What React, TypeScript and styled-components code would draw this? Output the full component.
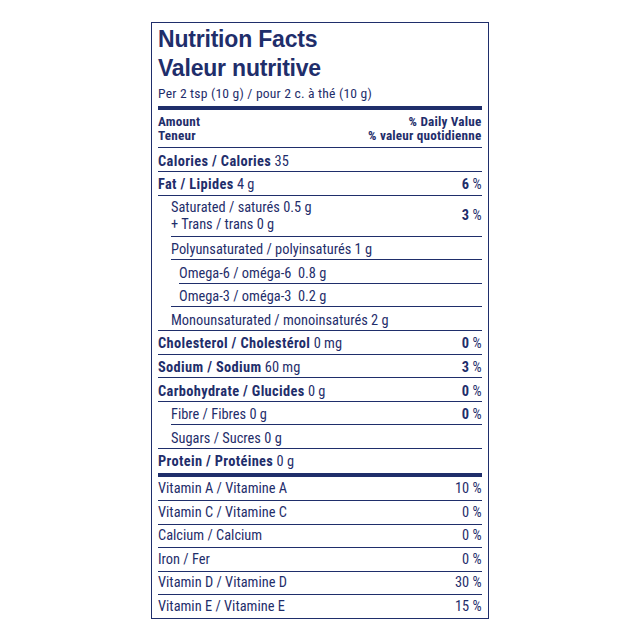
import React from "react";
import styled, { createGlobalStyle } from "styled-components";

const NAVY = "#1f2e6b";

const GlobalStyle = createGlobalStyle`
  html, body {
    margin: 0;
    padding: 0;
    background: #ffffff;
  }
  body {
    font-family: "Roboto Condensed", "Liberation Sans", Arial, sans-serif;
    color: ${NAVY};
  }
`;

const Page = styled.div`
  width: 640px;
  height: 640px;
  padding-top: 21.5px;
  box-sizing: border-box;
`;

const Label = styled.section`
  width: 338px;
  margin: 0 auto;
  box-sizing: border-box;
  border: 1.5px solid ${NAVY};
  padding: 2.5px 6.5px 0 6px;
`;

const Title = styled.h1`
  margin: 0;
  font-family: "Liberation Sans", Arial, sans-serif;
  font-size: 23px;
  line-height: 29px;
  font-weight: 700;
  letter-spacing: -0.2px;
`;

const Serving = styled.p`
  margin: 2px 0 0;
  font-size: 13.6px;
  line-height: 16px;
  letter-spacing: 0.2px;
`;

const ThickRule = styled.div<{ $top: number }>`
  height: 4px;
  margin-top: ${(p) => p.$top}px;
  background: ${NAVY};
`;

const Header = styled.div`
  display: flex;
  justify-content: space-between;
  padding: 4.9px 0 3.5px;
  font-size: 13.2px;
  line-height: 14.5px;
  font-weight: 700;
  letter-spacing: 0.2px;
`;

const HeaderCol = styled.div<{ $right?: boolean }>`
  text-align: ${(p) => (p.$right ? "right" : "left")};
`;

const Row = styled.div<{ $indent: number; $rule: number; $tall?: boolean }>`
  display: flex;
  justify-content: space-between;
  align-items: center;
  margin-left: ${(p) => p.$rule}px;
  padding: ${(p) => (p.$tall ? "3.5px 0 2.5px" : "4.5px 0 0.1px")}
    ${(p) => p.$indent - p.$rule}px;
  border-top: 1px solid ${NAVY};
  font-size: 14.4px;
  line-height: 18px;
`;

const Lines = styled.div`
  line-height: 17px;
`;

const Name = styled.span`
  font-weight: 700;
  letter-spacing: 0.35px;
`;

const Percent = styled.span`
  white-space: nowrap;
`;

const Digit = styled.b`
  font-weight: 700;
`;

const VitRow = styled.div<{ $first?: boolean }>`
  display: flex;
  justify-content: space-between;
  padding: ${(p) => (p.$first ? "3.5px 0 2.1px" : "2.5px 0 2.1px")};
  border-top: ${(p) => (p.$first ? "none" : `1px solid ${NAVY}`)};
  font-size: 14.4px;
  line-height: 18px;
`;

type Nutrient = {
  name?: string;
  amount?: string;
  lines?: string[];
  dv?: string;
  level: number;
};

const nutrients: Nutrient[] = [
  { name: "Calories / Calories", amount: "35", level: 0 },
  { name: "Fat / Lipides", amount: "4 g", dv: "6", level: 0 },
  { lines: ["Saturated / saturés 0.5 g", "+ Trans / trans 0 g"], dv: "3", level: 1 },
  { amount: "Polyunsaturated / polyinsaturés 1 g", level: 1 },
  { amount: "Omega-6 / oméga-6 \u00a00.8 g", level: 2 },
  { amount: "Omega-3 / oméga-3 \u00a00.2 g", level: 2 },
  { amount: "Monounsaturated / monoinsaturés 2 g", level: 1 },
  { name: "Cholesterol / Cholestérol", amount: "0 mg", dv: "0", level: 0 },
  { name: "Sodium / Sodium", amount: "60 mg", dv: "3", level: 0 },
  { name: "Carbohydrate / Glucides", amount: "0 g", dv: "0", level: 0 },
  { amount: "Fibre / Fibres 0 g", dv: "0", level: 1 },
  { amount: "Sugars / Sucres 0 g", level: 1 },
  { name: "Protein / Protéines", amount: "0 g", level: 0 },
];

const vitamins: [string, string][] = [
  ["Vitamin A / Vitamine A", "10 %"],
  ["Vitamin C / Vitamine C", "0 %"],
  ["Calcium / Calcium", "0 %"],
  ["Iron / Fer", "0 %"],
  ["Vitamin D / Vitamine D", "30 %"],
  ["Vitamin E / Vitamine E", "15 %"],
];

const INDENT = [0, 13, 21];

const App = () => {
  return (
    <Page>
      <GlobalStyle />
      <Label>
        <Title>
          Nutrition Facts
          <br />
          Valeur nutritive
        </Title>
        <Serving>Per 2 tsp (10 g) / pour 2 c. à thé (10 g)</Serving>
        <ThickRule $top={5} />
        <Header>
          <HeaderCol>
            Amount
            <br />
            Teneur
          </HeaderCol>
          <HeaderCol $right>
            % Daily Value
            <br />% valeur quotidienne
          </HeaderCol>
        </Header>
        {nutrients.map((n, i) => {
          const prev = i > 0 ? nutrients[i - 1].level : 0;
          const rule = INDENT[Math.min(prev, n.level)];
          return (
            <Row key={i} $indent={INDENT[n.level]} $rule={rule} $tall={!!n.lines}>
              {n.lines ? (
                <Lines>
                  {n.lines.map((l) => (
                    <div key={l}>{l}</div>
                  ))}
                </Lines>
              ) : (
                <span>
                  {n.name && <Name>{n.name}</Name>}
                  {n.name && " "}
                  {n.amount}
                </span>
              )}
              {n.dv && (
                <Percent>
                  <Digit>{n.dv}</Digit> %
                </Percent>
              )}
            </Row>
          );
        })}
        <ThickRule $top={1} />
        {vitamins.map(([label, value], i) => (
          <VitRow key={label} $first={i === 0}>
            <span>{label}</span>
            <span>{value}</span>
          </VitRow>
        ))}
      </Label>
    </Page>
  );
};

export default App;
